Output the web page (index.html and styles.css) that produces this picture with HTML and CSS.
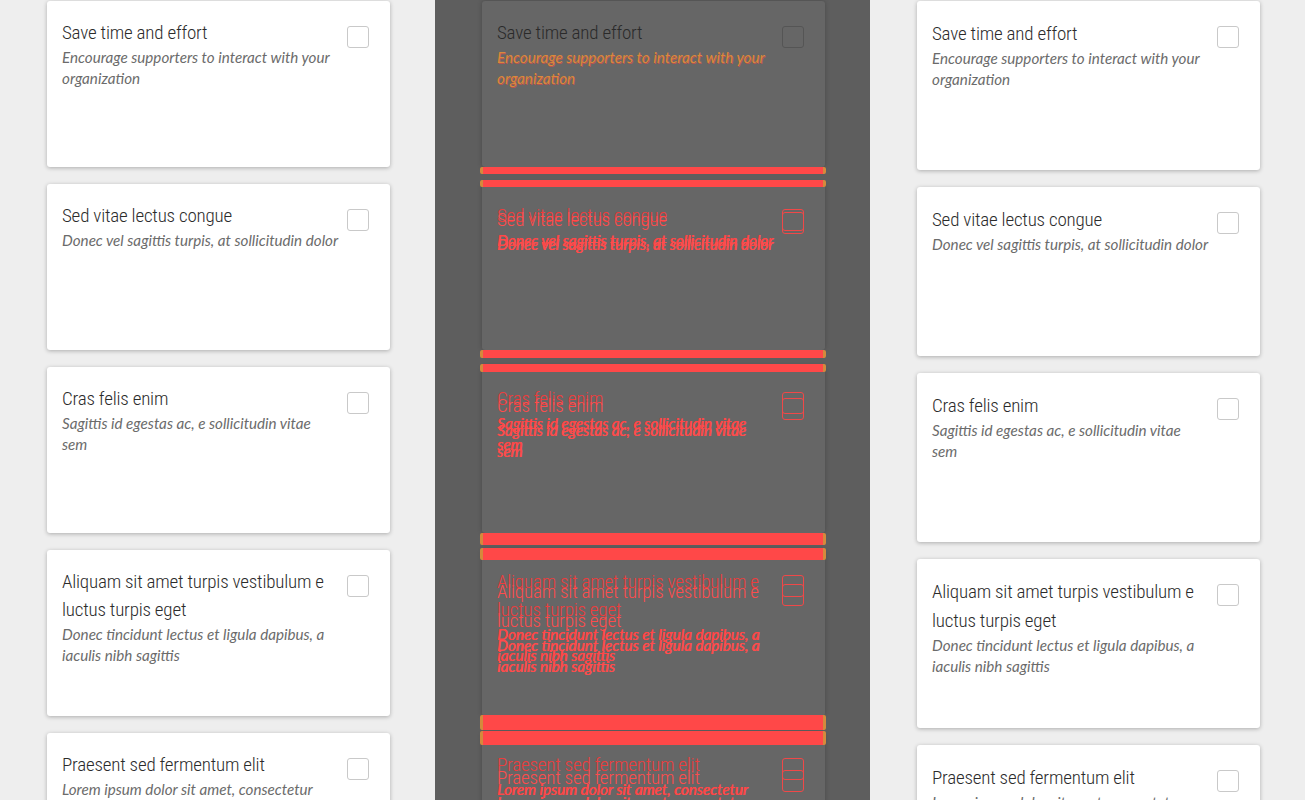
FILE: index.html
```html
<!DOCTYPE html>
<html lang="en">
<head>
<meta charset="utf-8">
<title>Visual diff</title>
<link rel="stylesheet" href="styles.css">
</head>
<body>
<div class="page">
  <section class="panel panel-light">
    <div class="stack">
      <article class="card"><div class="card-text"><h3 class="card-title">Save time and effort</h3><p class="card-desc">Encourage supporters to interact with your organization</p></div><span class="check"></span></article>
      <article class="card"><div class="card-text"><h3 class="card-title">Sed vitae lectus congue</h3><p class="card-desc">Donec vel sagittis turpis, at sollicitudin dolor</p></div><span class="check"></span></article>
      <article class="card"><div class="card-text"><h3 class="card-title">Cras felis enim</h3><p class="card-desc">Sagittis id egestas ac, e sollicitudin vitae<br>sem</p></div><span class="check"></span></article>
      <article class="card"><div class="card-text"><h3 class="card-title">Aliquam sit amet turpis vestibulum e luctus turpis eget</h3><p class="card-desc">Donec tincidunt lectus et ligula dapibus, a iaculis nibh sagittis</p></div><span class="check"></span></article>
      <article class="card"><div class="card-text"><h3 class="card-title">Praesent sed fermentum elit</h3><p class="card-desc">Lorem ipsum dolor sit amet, consectetur adipiscing elit</p></div><span class="check"></span></article>
    </div>
  </section>

  <section class="panel panel-diff">
    <div class="stack stack-base">
      <article class="card card-same"><div class="card-text"><h3 class="card-title">Save time and effort</h3><p class="card-desc">Encourage supporters to interact with your organization</p></div><span class="check"></span></article>
      <article class="card"><div class="card-text"><h3 class="card-title">Sed vitae lectus congue</h3><p class="card-desc">Donec vel sagittis turpis, at sollicitudin dolor</p></div><span class="check"></span></article>
      <article class="card"><div class="card-text"><h3 class="card-title">Cras felis enim</h3><p class="card-desc">Sagittis id egestas ac, e sollicitudin vitae<br>sem</p></div><span class="check"></span></article>
      <article class="card"><div class="card-text"><h3 class="card-title">Aliquam sit amet turpis vestibulum e luctus turpis eget</h3><p class="card-desc">Donec tincidunt lectus et ligula dapibus, a iaculis nibh sagittis</p></div><span class="check"></span></article>
      <article class="card"><div class="card-text"><h3 class="card-title">Praesent sed fermentum elit</h3><p class="card-desc">Lorem ipsum dolor sit amet, consectetur adipiscing elit</p></div><span class="check"></span></article>
    </div>
    <div class="stack stack-over" aria-hidden="true">
      <article class="card card-same"><div class="card-text"><h3 class="card-title">Save time and effort</h3><p class="card-desc">Encourage supporters to interact with your organization</p></div><span class="check"></span></article>
      <article class="card"><div class="card-text"><h3 class="card-title">Sed vitae lectus congue</h3><p class="card-desc">Donec vel sagittis turpis, at sollicitudin dolor</p></div><span class="check"></span></article>
      <article class="card"><div class="card-text"><h3 class="card-title">Cras felis enim</h3><p class="card-desc">Sagittis id egestas ac, e sollicitudin vitae<br>sem</p></div><span class="check"></span></article>
      <article class="card"><div class="card-text"><h3 class="card-title">Aliquam sit amet turpis vestibulum e luctus turpis eget</h3><p class="card-desc">Donec tincidunt lectus et ligula dapibus, a iaculis nibh sagittis</p></div><span class="check"></span></article>
      <article class="card"><div class="card-text"><h3 class="card-title">Praesent sed fermentum elit</h3><p class="card-desc">Lorem ipsum dolor sit amet, consectetur adipiscing elit</p></div><span class="check"></span></article>
    </div>
    <div class="bands" aria-hidden="true">
      <span class="band band-1"></span>
      <span class="band band-2"></span>
      <span class="band band-3"></span>
      <span class="band band-4"></span>
      <span class="band band-5"></span>
      <span class="band band-6"></span>
      <span class="band band-7"></span>
      <span class="band band-8"></span>
    </div>
  </section>

  <section class="panel panel-light panel-actual">
    <div class="stack">
      <article class="card"><div class="card-text"><h3 class="card-title">Save time and effort</h3><p class="card-desc">Encourage supporters to interact with your organization</p></div><span class="check"></span></article>
      <article class="card"><div class="card-text"><h3 class="card-title">Sed vitae lectus congue</h3><p class="card-desc">Donec vel sagittis turpis, at sollicitudin dolor</p></div><span class="check"></span></article>
      <article class="card"><div class="card-text"><h3 class="card-title">Cras felis enim</h3><p class="card-desc">Sagittis id egestas ac, e sollicitudin vitae<br>sem</p></div><span class="check"></span></article>
      <article class="card"><div class="card-text"><h3 class="card-title">Aliquam sit amet turpis vestibulum e luctus turpis eget</h3><p class="card-desc">Donec tincidunt lectus et ligula dapibus, a iaculis nibh sagittis</p></div><span class="check"></span></article>
      <article class="card"><div class="card-text"><h3 class="card-title">Praesent sed fermentum elit</h3><p class="card-desc">Lorem ipsum dolor sit amet, consectetur adipiscing elit</p></div><span class="check"></span></article>
    </div>
  </section>
</div>
</body>
</html>
```

FILE: styles.css
```css
html, body {
  margin: 0;
  padding: 0;
  height: 100%;
  overflow: hidden;
}

body {
  background: #eeeeee;
  font-family: "Liberation Sans", sans-serif;
}

.page {
  display: flex;
  height: 800px;
}

.panel {
  width: 435px;
  flex: none;
  box-sizing: border-box;
  padding: 1px 0 0 47px;
  overflow: hidden;
}

.panel-light {
  background: #eeeeee;
}

.panel-diff {
  background: #5e5e5e;
  position: relative;
}

.stack {
  display: flex;
  flex-direction: column;
  gap: 17px;
}

.card {
  display: flex;
  align-items: flex-start;
  gap: 8px;
  width: 343px;
  height: 166px;
  flex: none;
  box-sizing: border-box;
  padding: 18px 21px 0 15px;
  background: #ffffff;
  border-radius: 3px;
  box-shadow: 0 1px 4px rgba(0, 0, 0, 0.28);
}

.card-text {
  flex: 1;
  min-width: 0;
}

.card-title {
  margin: 0;
  font-family: "Roboto Condensed", "Open Sans", "DejaVu Sans", sans-serif;
  font-stretch: 75%;
  font-size: 19px;
  letter-spacing: -0.2px;
  font-weight: 300;
  line-height: 28px;
  color: #2b2b2b;
}

.card-desc {
  margin: 0;
  font-family: "Lato", "Open Sans", sans-serif;
  font-style: italic;
  font-size: 15.2px;
  line-height: 21px;
  color: #6b6b6b;
}

.check {
  flex: none;
  width: 22px;
  height: 22px;
  margin-top: 7px;
  box-sizing: border-box;
  border: 1px solid #c9c9c9;
  border-radius: 3px;
  background: #ffffff;
}

/* actual (right) panel: slightly taller metrics */
.panel-actual .card {
  height: 169px;
}

.panel-actual .card-title {
  line-height: 29px;
}

/* diff panel */
.panel-diff .card {
  background: #666666;
  box-shadow: 0 0 5px rgba(0, 0, 0, 0.22);
}

.panel-diff .check {
  background: transparent;
  border-color: #f04848;
}

.panel-diff .card-title {
  color: #ee3c3c;
}

.panel-diff .card-desc {
  color: #ff4747;
  text-shadow: 0.6px 0 0 #ff4747;
}

.panel-diff .card-same .card-title {
  color: #2a2a2a;
}

.panel-diff .card-same .card-desc {
  color: #d98a3c;
  text-shadow: 0.6px 1px 0 rgba(240, 70, 60, 0.6);
}

.panel-diff .card-same .check {
  border-color: #555555;
}

.stack-over {
  position: absolute;
  top: 1px;
  left: 47px;
}

.stack-over .card {
  background: transparent;
  box-shadow: none;
  height: 169px;
}

.stack-over .card-title {
  line-height: 29px;
  color: #ff4c4c;
}

.stack-over .card-desc {
  color: #ff4d4d;
}

.stack-over .card-same {
  visibility: hidden;
}

.bands {
  position: absolute;
  inset: 0;
  pointer-events: none;
}

.band {
  position: absolute;
  left: 45px;
  width: 346px;
  box-sizing: border-box;
  background: #ff4848;
  border-left: 3px solid #d48a3c;
  border-right: 3px solid #d48a3c;
  border-radius: 2px;
}

.band-1 { top: 167px; height: 7px; }
.band-2 { top: 180px; height: 7px; }
.band-3 { top: 350px; height: 8px; }
.band-4 { top: 364px; height: 8px; }
.band-5 { top: 533px; height: 12px; }
.band-6 { top: 548px; height: 12px; }
.band-7 { top: 715px; height: 15px; }
.band-8 { top: 731px; height: 14px; }
```
